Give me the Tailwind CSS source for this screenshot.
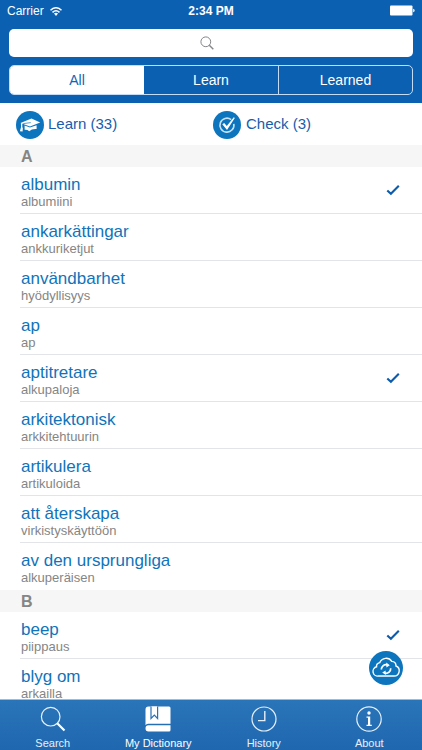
<!DOCTYPE html>
<html lang="en">
<head>
<meta charset="utf-8">
<meta name="viewport" content="width=device-width, initial-scale=1">
<title>My Dictionary</title>
<script src="https://cdn.jsdelivr.net/npm/@tailwindcss/browser@4"></script>
</head>
<body class="flex h-screen flex-col overflow-hidden bg-white font-['Liberation_Sans',Arial,sans-serif]">
<svg class="hidden" aria-hidden="true">
  <symbol id="tick" viewBox="0 0 14 12"><path d="M1.3 6.4 4.9 9.8 12.8 1.8" fill="none" stroke="#0d5cab" stroke-width="2.1"/></symbol>
</svg>

<header class="shrink-0 bg-[#0c60b1] px-[9px] pb-2 text-white">
  <div class="-mx-0.5 grid h-[29px] grid-cols-3 items-start pt-[3px] text-xs leading-4">
    <div class="flex items-center gap-1.5">
      <span>Carrier</span>
      <svg class="h-[9px] w-3" viewBox="0 0 12 9" fill="none" stroke="#fff" stroke-width="1.5" aria-label="Wi-Fi"><path d="M.5 3.3Q6-1.8 11.5 3.3M2.5 5.4Q6 2.2 9.5 5.4"/><path d="M4 6.6Q6 5 8 6.6L6 9Z" fill="#fff" stroke="none"/></svg>
    </div>
    <div class="text-center font-bold">2:34 PM</div>
    <svg class="mt-0.5 h-[11px] w-[25px] justify-self-end" viewBox="0 0 25 11" fill="#fff" aria-label="Battery full"><rect x="0" y=".5" width="22.5" height="10" rx="1"/><path d="M23.2 3.8Q24.6 4 24.6 5.5T23.2 7.2Z"/></svg>
  </div>
  <div class="relative">
    <input type="search" aria-label="Search" class="block h-7 w-full rounded-[5px] bg-white px-3 text-center text-sm text-gray-700 outline-none">
    <span class="pointer-events-none absolute inset-0 flex items-center justify-center pr-2">
      <svg class="size-3.5" viewBox="0 0 14 14" fill="none" stroke="#85858a"><circle cx="5.8" cy="5.8" r="4.9"/><path d="m9.3 9.3 4 4" stroke-width="1.4"/></svg>
    </span>
  </div>
  <div role="group" aria-label="Filter" class="mt-2 grid h-[30px] grid-cols-3 overflow-hidden rounded-[5px] border border-[#c4dcf5] text-sm">
    <button class="bg-white text-[#1465b3]" aria-pressed="true">All</button>
    <button aria-pressed="false">Learn</button>
    <button class="border-l border-[#c4dcf5]" aria-pressed="false">Learned</button>
  </div>
</header>

<main class="min-h-0 grow overflow-y-auto [scrollbar-width:none]">
  <div class="grid h-[42px] grid-cols-[197px_1fr] items-center pt-px pl-4 text-[15px] text-[#185cab]">
    <button class="flex items-center gap-1 text-left">
      <svg class="size-7" viewBox="0 0 28 28"><circle cx="14" cy="14" r="14" fill="#0d75be"/><path d="M4.5 12 15.5 7.6 24.2 11.6 14 15.4 8.5 13.6Z" fill="#fff"/><path d="M8.6 14.6 14 16.6 20.6 14.2V18Q15.8 17.6 13.2 20.2 11.6 18.6 8.6 18.8Z" fill="#fff"/><path d="M14.8 11.6 7.4 12.6V16.5" fill="none" stroke="#0d75be" stroke-width=".7"/><path d="M5.6 12 5.7 17" stroke="#fff" stroke-width="1.3"/><path d="M5 16.2 6.8 16.7 6.6 20.5 3.9 20.3Z" fill="#fff"/></svg>
      <span>Learn (33)</span>
    </button>
    <button class="flex items-center gap-[5px] text-left">
      <svg class="size-7" viewBox="0 0 28 28" fill="none"><circle cx="14" cy="14" r="14" fill="#0d75be"/><path d="M18.2 8.6A7 7 0 1 0 20.8 12.8" stroke="#c5e1f5" stroke-width="1.6"/><path d="M9.3 13.2 11.2 12 13.8 15 20.8 6.3 21.8 7 14 19Z" fill="#fff"/></svg>
      <span>Check (3)</span>
    </button>
  </div>

  <section>
    <h2 class="h-[22px] bg-[#f6f6f6] pl-[21px] text-base leading-6 font-bold text-[#858585]">A</h2>
    <ul class="divide-y divide-[#e3e4e7] pl-5 [&>li]:flex [&>li]:h-[47px] [&>li]:items-center [&>li]:justify-between [&>li]:pr-[22px] [&_b]:block [&_b]:text-[17px] [&_b]:leading-5 [&_b]:font-normal [&_b]:text-[#0f74bb] [&_p]:pt-[3px] [&_p]:pl-px [&_small]:block [&_small]:text-[13px] [&_small]:leading-[14px] [&_small]:text-[#858585]">
      <li><p><b>albumin</b><small>albumiini</small></p><svg class="h-3 w-3.5" role="img" aria-label="Learned"><use href="#tick"/></svg></li>
      <li><p><b>ankarkättingar</b><small>ankkuriketjut</small></p></li>
      <li><p><b>användbarhet</b><small>hyödyllisyys</small></p></li>
      <li><p><b>ap</b><small>ap</small></p></li>
      <li><p><b>aptitretare</b><small>alkupaloja</small></p><svg class="h-3 w-3.5" role="img" aria-label="Learned"><use href="#tick"/></svg></li>
      <li><p><b>arkitektonisk</b><small>arkkitehtuurin</small></p></li>
      <li><p><b>artikulera</b><small>artikuloida</small></p></li>
      <li><p><b>att återskapa</b><small>virkistyskäyttöön</small></p></li>
      <li><p><b>av den ursprungliga</b><small>alkuperäisen</small></p></li>
    </ul>
  </section>
  <section>
    <h2 class="h-[22px] bg-[#f6f6f6] pl-[21px] text-base leading-6 font-bold text-[#858585]">B</h2>
    <ul class="divide-y divide-[#e3e4e7] pl-5 [&>li]:flex [&>li]:h-[47px] [&>li]:items-center [&>li]:justify-between [&>li]:pr-[22px] [&_b]:block [&_b]:text-[17px] [&_b]:leading-5 [&_b]:font-normal [&_b]:text-[#0f74bb] [&_p]:pt-[3px] [&_p]:pl-px [&_small]:block [&_small]:text-[13px] [&_small]:leading-[14px] [&_small]:text-[#858585]">
      <li><p><b>beep</b><small>piippaus</small></p><svg class="h-3 w-3.5" role="img" aria-label="Learned"><use href="#tick"/></svg></li>
      <li><p><b>blyg om</b><small>arkailla</small></p></li>
    </ul>
  </section>
</main>

<button aria-label="Sync" class="fixed right-[19px] bottom-[65px] size-[34px] rounded-full">
  <svg class="size-full" viewBox="0 0 34 34" fill="none" stroke="#fff"><circle cx="17" cy="17" r="17" fill="#0d75be" stroke="none"/><path d="M9.5 25H25A5.2 5.2 0 0 0 27 15 Q27 10.6 22.8 10.4 A6.8 6.8 0 0 0 10.8 11.6 Q7 12.6 7.6 15.8 A4.7 4.7 0 0 0 9.5 25Z" stroke-width="1.4"/><path d="M12.3 18.6A4.8 4.8 0 0 1 18 13.8M21.7 17.2A4.8 4.8 0 0 1 16 22.2" stroke-width="1.7"/><path d="M17.2 11.6 20.8 14.2 17.4 16.4ZM16.8 24 13.2 21.6 16.6 19.6Z" fill="#fff" stroke="none"/></svg>
</button>

<nav class="grid h-[51px] shrink-0 grid-cols-4 border-t border-[#9dbbdc] bg-linear-to-b from-[#2a74b9] to-[#1f68b0] text-[11px] leading-3 text-[#e6f0fa] [&>a]:flex [&>a]:flex-col [&>a]:items-center [&>a]:gap-[5px] [&>a]:pt-1.5 [&_svg]:size-[26px]">
  <a href="#search"><svg viewBox="0 0 26 26" fill="none" stroke="#e6f0fa"><circle cx="10.7" cy="10.7" r="9.3" stroke-width="1.2"/><path d="m17.2 17.2 7.3 7.3" stroke="#fff" stroke-width="2.2"/></svg><span>Search</span></a>
  <a href="#dictionary" aria-current="page" class="text-white"><svg viewBox="0 0 26 26"><path d="M3.5.5H24Q25.5.5 25.5 2V17.8H3.5Q1.8 17.8.5 19.2V3.5Q.5.5 3.5.5ZM3.5 19.2H25.5V24Q25.5 25.5 24 25.5H3.5Q.5 25.5.5 22.5 .5 19.2 3.5 19.2Z" fill="#fff"/><path d="M6 .5V12.5L9.3 9.2 12.6 12.5V.5" fill="#fff" stroke="#2871b6" stroke-width="1.2"/></svg><span>My Dictionary</span></a>
  <a href="#history"><svg viewBox="0 0 26 26" fill="none" stroke="#e6f0fa" stroke-width="1.2"><circle cx="13" cy="13" r="12"/><path d="M13.8 5V14.6H7" stroke-width="1.4"/></svg><span>History</span></a>
  <a href="#about"><svg viewBox="0 0 26 26" fill="none" stroke="#e6f0fa" stroke-width="1.2"><circle cx="13" cy="13" r="12.2"/><circle cx="13" cy="7" r="1.7" fill="#fff" stroke="none"/><path d="M10.5 10.5H14.2V18.8H15.8V20H10.5V18.8H12V11.7H10.5Z" fill="#fff" stroke="none"/></svg><span>About</span></a>
</nav>
</body>
</html>
